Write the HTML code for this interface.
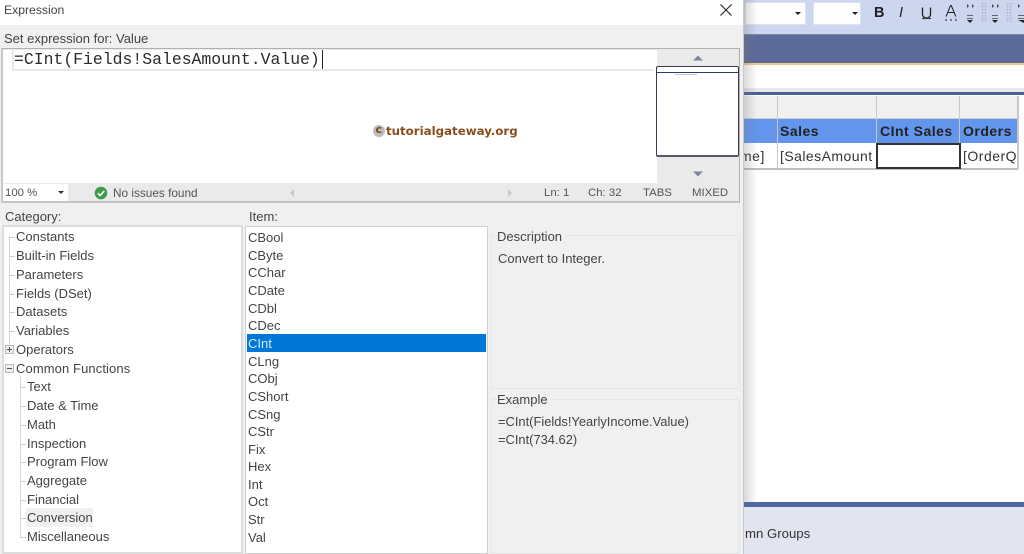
<!DOCTYPE html>
<html><head><meta charset="utf-8"><style>
html,body{margin:0;padding:0}
body{width:1024px;height:554px;position:relative;overflow:hidden;background:#fff;font-family:"Liberation Sans",sans-serif;color:#444}
div,span{position:absolute;box-sizing:border-box}
.t{white-space:nowrap;font-size:13px;line-height:16px;color:#444;filter:blur(.3px)}
.c{left:16px}.d{left:27px}.i{left:248px}
.h{width:1px;background:#ccc;height:1px}
.s{font-size:11.400px;color:#555}
</style></head><body>
<!-- background app -->
<div style="left:743px;top:0;width:281px;height:34px;background:#ccd6ef"></div>
<div style="left:745px;top:2px;width:61px;height:23px;background:#fdfdfd;border:1px solid #dde2ee"></div>
<div style="left:813px;top:2px;width:48px;height:23px;background:#fdfdfd;border:1px solid #dde2ee"></div>
<svg style="position:absolute;left:743px;top:0" width="281" height="34">
<path d="M52 12h6l-3 3zM109 12h6l-3 3z" fill="#222"/>
<path d="M179.500 7.500v7a4 3.500 0 0 0 8 0v-7" fill="none" stroke="#222" stroke-width="1.300"/>
<path d="M179 18.500h9" stroke="#444" stroke-width="1.200"/>
<path d="M203 16.500l4.500-11h.8l4.500 11M205 12.500h6" fill="none" stroke="#222" stroke-width="1"/>
<path d="M202 20h2M207 20h2M212 20h2" stroke="#444" stroke-width="1.200"/>
<path d="M224 4l2 2-2 2zM229 4l2 2-2 2z" fill="#444"/>
<path d="M224 15.500h6M224 18.500h6" stroke="#666" stroke-width="1"/><path d="M224 20h6l-3 3z" fill="#222"/>
<path d="M249 4l2 2-2 2zM254 4l2 2-2 2z" fill="#444"/>
<path d="M249 15.500h6M249 18.500h6" stroke="#666" stroke-width="1"/><path d="M249 20h6l-3 3z" fill="#222"/>
<path d="M275 4l2 2-2 2z" fill="#444"/>
<path d="M275 15.500h6M275 18.500h6" stroke="#666" stroke-width="1"/><path d="M275 20h6v3z" fill="#222"/>
<path d="M239.500 3v19M242.500 3v19M264.500 3v19M267.500 3v19" stroke="#aab0c0" stroke-width="1.500" stroke-dasharray="1.500 1.500"/>
</svg>
<div class="t" style="left:874px;top:5px;font-weight:bold;font-size:14.500px;line-height:17px;color:#222">B</div>
<div class="t" style="left:899px;top:5px;font-style:italic;font-size:14.500px;line-height:17px;color:#222">I</div>
<div style="left:743px;top:34px;width:281px;height:29px;background:#5c6a99;border-top:1px solid #7c84a4"></div>
<div style="left:743px;top:63px;width:281px;height:2px;background:#f3c784"></div>
<div style="left:743px;top:88px;width:281px;height:4px;background:#e8e8e8"></div>
<div style="left:743px;top:92px;width:281px;height:3px;background:#46609c"></div>
<!-- table -->
<div style="left:743px;top:96px;width:34px;height:22px;background:#f0f0f0"></div>
<div style="left:778px;top:96px;width:98px;height:22px;background:#f0f0f0"></div>
<div style="left:877px;top:96px;width:82px;height:22px;background:#f0f0f0"></div>
<div style="left:960px;top:96px;width:57px;height:22px;background:#f0f0f0"></div>
<div style="left:743px;top:119px;width:34px;height:24px;background:#6495ed"></div>
<div style="left:778px;top:119px;width:98px;height:24px;background:#6495ed"></div>
<div style="left:877px;top:119px;width:82px;height:24px;background:#6495ed"></div>
<div style="left:960px;top:119px;width:57px;height:24px;background:#6495ed"></div>
<div style="left:743px;top:118px;width:275px;height:1px;background:#cfcfcf"></div>
<div style="left:743px;top:168px;width:275px;height:2px;background:#bdbdbd"></div>
<div style="left:777px;top:96px;width:1px;height:73px;background:#c8c8c8"></div>
<div style="left:876px;top:96px;width:1px;height:73px;background:#c8c8c8"></div>
<div style="left:959px;top:96px;width:1px;height:73px;background:#c8c8c8"></div>
<div style="left:1017px;top:96px;width:2px;height:73px;background:#c8c8c8"></div>
<div class="t" style="left:780px;top:123px;font-weight:bold;font-size:14px;color:#222;letter-spacing:.5px">Sales</div>
<div class="t" style="left:880px;top:123px;font-weight:bold;font-size:14px;color:#222;letter-spacing:.5px">CInt Sales</div>
<div class="t" style="left:963px;top:123px;font-weight:bold;font-size:14px;color:#222;letter-spacing:.5px">Orders</div>
<div class="t" style="left:740px;top:148px;font-size:14px;color:#333;letter-spacing:.5px">me]</div>
<div class="t" style="left:780px;top:148px;font-size:14px;color:#333;letter-spacing:.45px">[SalesAmount</div>
<div class="t" style="left:963px;top:148px;font-size:14px;color:#333;letter-spacing:.5px;width:54px;overflow:hidden">[OrderQ</div>
<div style="left:876px;top:143px;width:85px;height:26px;background:#fff;border:2px solid #333"></div>
<div style="left:743px;top:502px;width:281px;height:5px;background:#4f689f"></div>
<div style="left:743px;top:507px;width:281px;height:47px;background:#e2e5ef"></div>
<div class="t" style="left:745px;top:526px;font-size:13.200px;color:#333">mn Groups</div>
<!-- dialog shadow -->
<div style="left:743px;top:0;width:14px;height:502px;background:linear-gradient(90deg,rgba(120,120,120,.3),rgba(255,255,255,0))"></div>
<!-- dialog -->
<div style="left:0;top:0;width:744px;height:554px;background:#f0f0f0;border-right:1px solid #c9c9c9"></div>
<div style="left:0;top:0;width:743px;height:25px;background:#fff"></div>
<div class="t" style="left:4px;top:2px;font-size:12.200px">Expression</div>
<svg style="position:absolute;left:719px;top:3px" width="14" height="14"><path d="M1.500 1.500l11 11M12.500 1.500l-11 11" stroke="#222" stroke-width="1.100" fill="none"/></svg>
<div class="t" style="left:4px;top:31px">Set expression for: Value</div>
<!-- editor -->
<div style="left:1px;top:48px;width:739px;height:155px;background:#eaeaea;border:1px solid #b5b0aa;border-bottom:2px solid #c4c4c4;border-left:2px solid #c8c8c8"></div>
<div style="left:3px;top:50px;width:651px;height:133px;background:#fff"></div>
<div style="left:654px;top:50px;width:3px;height:133px;background:#fff"></div>
<div style="left:12px;top:69px;width:642px;height:2px;background:#e9e9e9"></div>
<div style="left:12px;top:50px;width:2px;height:21px;background:#e9e9e9"></div>
<div style="left:14px;top:50px;font-family:'Liberation Mono',monospace;font-size:16.450px;line-height:19px;color:#2b2b2b;white-space:nowrap;filter:blur(.25px)">=CInt(Fields!SalesAmount.Value)</div>
<div style="left:322px;top:50px;width:1px;height:19px;background:#222"></div>
<!-- watermark -->
<div style="left:373px;top:125px;width:12px;height:12px;border-radius:50%;background:#bbb"></div>
<div style="left:375.500px;top:122px;font-family:'DejaVu Sans',sans-serif;font-weight:bold;font-size:11px;line-height:16px;color:#7a4a22;white-space:nowrap">c</div>
<div style="left:386px;top:122px;font-family:'DejaVu Sans',sans-serif;font-weight:bold;font-size:11.800px;line-height:18px;color:#8a4e1e;white-space:nowrap;filter:blur(.3px)">tutorialgateway.org</div>
<!-- minimap -->
<svg style="position:absolute;left:690px;top:54px" width="16" height="8"><path d="M3 6.500l5-5 5 5z" fill="#7f869b"/></svg>
<svg style="position:absolute;left:690px;top:170px" width="16" height="8"><path d="M3 1.500l5 5 5-5z" fill="#7f869b"/></svg>
<div style="left:656px;top:66px;width:83px;height:91px;background:#fff;border:1px solid #333a55;border-bottom:2px solid #55586a;border-radius:2px"></div>
<div style="left:657px;top:72px;width:81px;height:1px;background:#2c3a70"></div>
<div style="left:675px;top:74px;width:22px;height:1px;background:#c3c8d8"></div>
<!-- status -->
<div style="left:3px;top:184px;width:65px;height:17px;background:#fff"></div>
<div class="t s" style="left:5px;top:185px">100 %</div>
<svg style="position:absolute;left:57px;top:190px" width="8" height="5"><path d="M1 1h6l-3 3z" fill="#333"/></svg>
<svg style="position:absolute;left:94px;top:186px" width="14" height="14"><circle cx="7" cy="7" r="6.300" fill="#3f9b4b"/><path d="M3.800 7.200l2.300 2.300 4.200-4.500" fill="none" stroke="#fff" stroke-width="1.500"/></svg>
<div class="t s" style="left:113px;top:185px;font-size:11.800px">No issues found</div>
<svg style="position:absolute;left:288px;top:188px" width="8" height="10"><path d="M6 1v8L2 5z" fill="#c8c8c8"/></svg>
<svg style="position:absolute;left:506px;top:188px" width="8" height="10"><path d="M2 1v8l4-4z" fill="#c8c8c8"/></svg>
<div class="t s" style="left:544px;top:185px">Ln: 1</div>
<div class="t s" style="left:588px;top:185px">Ch: 32</div>
<div class="t s" style="left:643px;top:185px">TABS</div>
<div class="t s" style="left:692px;top:185px">MIXED</div>
<!-- category -->
<div class="t" style="left:5px;top:209px">Category:</div>
<div style="left:2px;top:225px;width:241px;height:329px;background:#fff;border:2px solid #dcdcdc"></div>
<div style="left:9px;top:236px;width:1px;height:110px;background:#d4d4d4"></div>
<div style="left:20px;top:376px;width:1px;height:161px;background:#d4d4d4"></div>
<div class="h" style="left:9px;top:237px;width:6px"></div><div class="h" style="left:9px;top:256px;width:6px"></div><div class="h" style="left:9px;top:275px;width:6px"></div><div class="h" style="left:9px;top:294px;width:6px"></div><div class="h" style="left:9px;top:312px;width:6px"></div><div class="h" style="left:9px;top:331px;width:6px"></div>
<div class="h" style="left:20px;top:387px;width:6px"></div><div class="h" style="left:20px;top:406px;width:6px"></div><div class="h" style="left:20px;top:425px;width:6px"></div><div class="h" style="left:20px;top:444px;width:6px"></div><div class="h" style="left:20px;top:462px;width:6px"></div><div class="h" style="left:20px;top:481px;width:6px"></div><div class="h" style="left:20px;top:500px;width:6px"></div><div class="h" style="left:20px;top:518px;width:6px"></div><div class="h" style="left:20px;top:537px;width:6px"></div>
<svg style="position:absolute;left:5px;top:345px" width="10" height="30"><rect x=".5" y=".5" width="8" height="8" fill="#eee" stroke="#bbb"/><path d="M2 4.500h5M4.500 2v5" stroke="#555"/><rect x=".5" y="19.500" width="8" height="8" fill="#eee" stroke="#bbb"/><path d="M2 23.500h5" stroke="#555"/></svg>
<div class="t c" style="top:229px">Constants</div>
<div class="t c" style="top:248px">Built-in Fields</div>
<div class="t c" style="top:267px">Parameters</div>
<div class="t c" style="top:286px">Fields (DSet)</div>
<div class="t c" style="top:304px">Datasets</div>
<div class="t c" style="top:323px">Variables</div>
<div class="t c" style="top:342px">Operators</div>
<div class="t c" style="top:361px;letter-spacing:.1px">Common Functions</div>
<div class="t d" style="top:379px">Text</div>
<div class="t d" style="top:398px">Date &amp; Time</div>
<div class="t d" style="top:417px">Math</div>
<div class="t d" style="top:436px">Inspection</div>
<div class="t d" style="top:454px">Program Flow</div>
<div class="t d" style="top:473px">Aggregate</div>
<div class="t d" style="top:492px">Financial</div>
<div style="left:26px;top:508px;width:67px;height:19px;background:#f0f0f0"></div>
<div class="t d" style="top:510px">Conversion</div>
<div class="t d" style="top:529px">Miscellaneous</div>
<!-- item -->
<div class="t" style="left:249px;top:209px">Item:</div>
<div style="left:245px;top:226px;width:243px;height:328px;background:#fff;border:1px solid #cfcfcf"></div>
<div style="left:247px;top:334px;width:239px;height:18px;background:#0078d7"></div>
<div class="t i" style="top:230px">CBool</div>
<div class="t i" style="top:248px">CByte</div>
<div class="t i" style="top:265px">CChar</div>
<div class="t i" style="top:283px">CDate</div>
<div class="t i" style="top:301px">CDbl</div>
<div class="t i" style="top:318px">CDec</div>
<div class="t i" style="top:336px;color:#dbe9f8">CInt</div>
<div class="t i" style="top:354px">CLng</div>
<div class="t i" style="top:371px">CObj</div>
<div class="t i" style="top:389px">CShort</div>
<div class="t i" style="top:407px">CSng</div>
<div class="t i" style="top:424px">CStr</div>
<div class="t i" style="top:442px">Fix</div>
<div class="t i" style="top:459px">Hex</div>
<div class="t i" style="top:477px">Int</div>
<div class="t i" style="top:494px">Oct</div>
<div class="t i" style="top:512px">Str</div>
<div class="t i" style="top:530px">Val</div>
<!-- description -->
<div style="left:491px;top:235px;width:249px;height:154px;border:1px solid #e6e6e6;border-radius:2px"></div>
<div class="t" style="left:497px;top:229px;background:#f0f0f0;padding-right:3px">Description</div>
<div class="t" style="left:498px;top:251px">Convert to Integer.</div>
<div style="left:491px;top:399px;width:249px;height:155px;border:1px solid #e6e6e6;border-radius:2px"></div>
<div class="t" style="left:497px;top:392px;background:#f0f0f0;padding-right:3px">Example</div>
<div class="t" style="left:498px;top:414px;font-size:12.900px">=CInt(Fields!YearlyIncome.Value)</div>
<div class="t" style="left:498px;top:432px;font-size:12.900px">=CInt(734.62)</div>
</body></html>
